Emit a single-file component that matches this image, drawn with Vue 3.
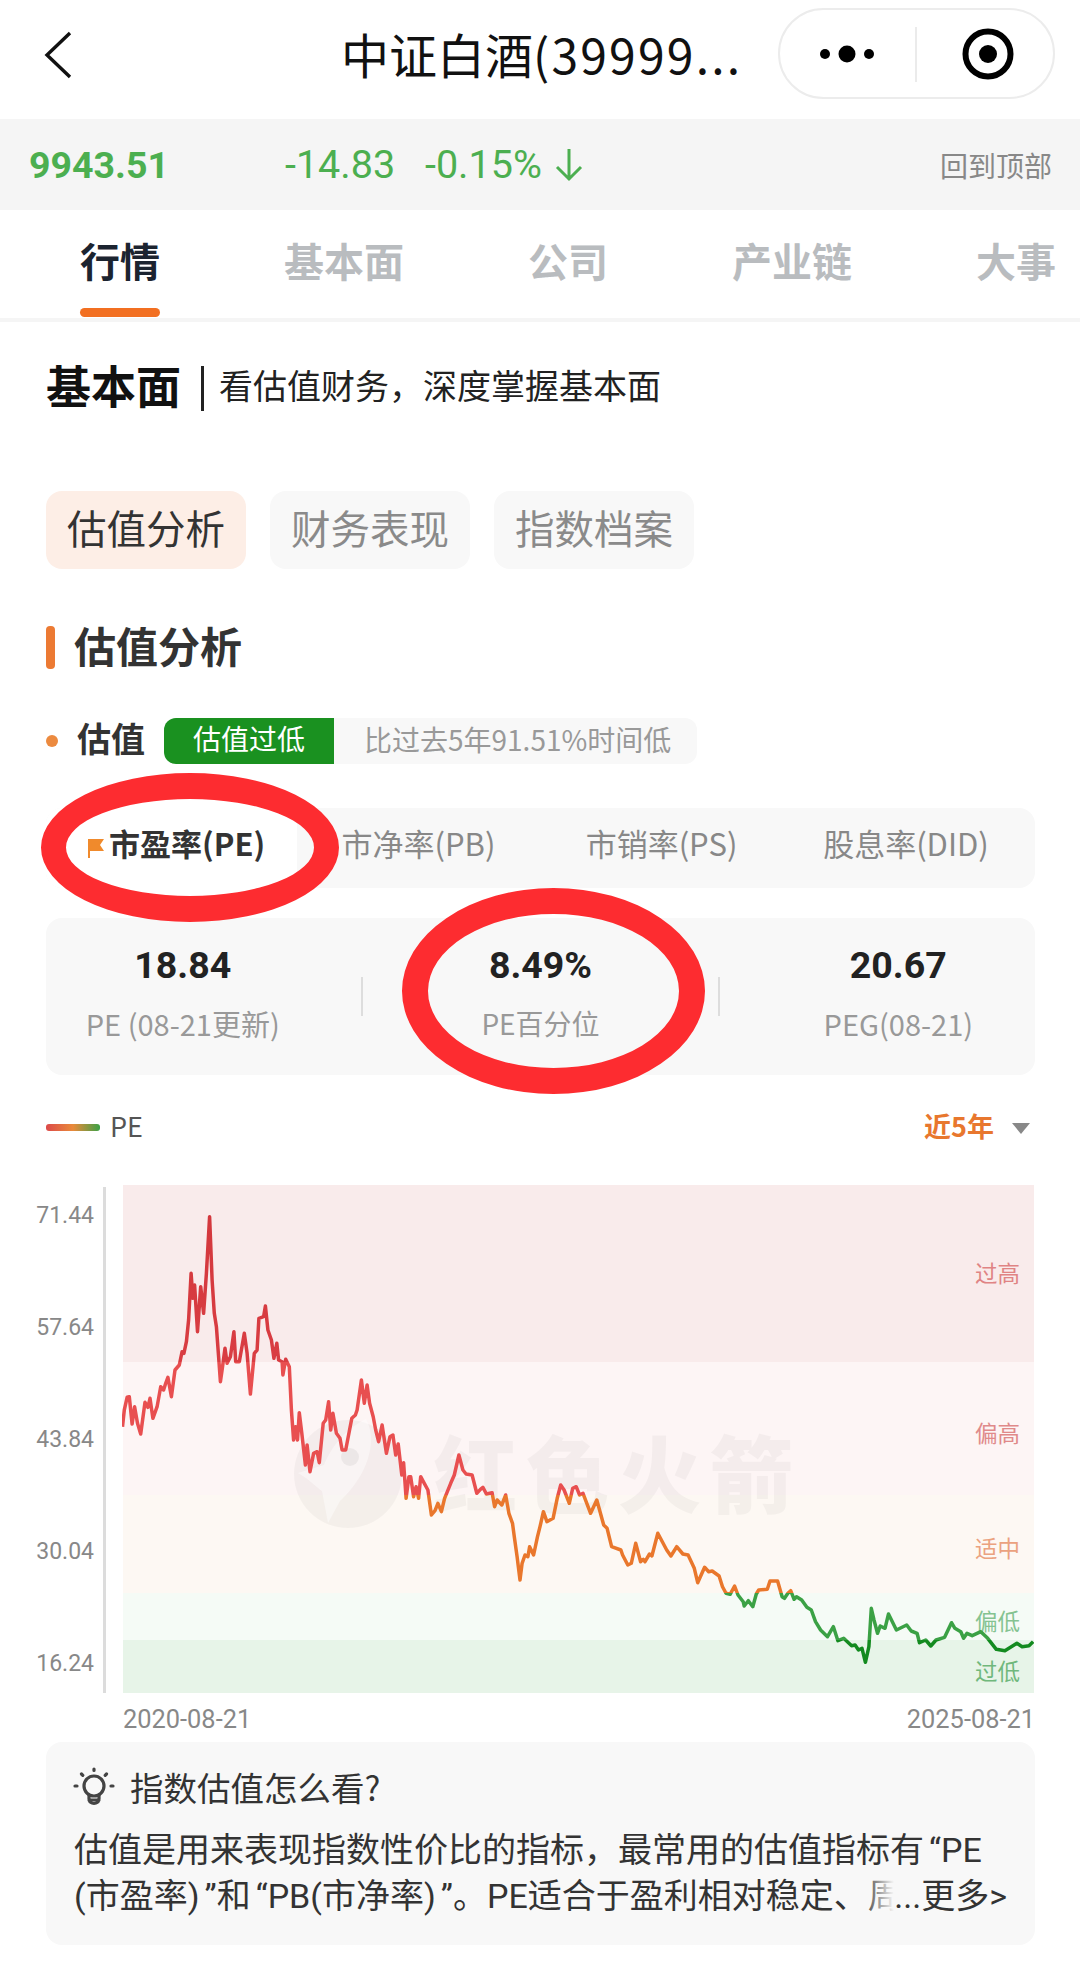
<template>
  <div class="page">
    <!-- top nav -->
    <div class="nav">
      <svg class="back" width="28" height="48" viewBox="0 0 28 48">
        <path d="M26 2 L3 24 L26 46" fill="none" stroke="#111" stroke-width="3.4" />
      </svg>
      <div class="nav-title">中证白酒<span>(39999...</span></div>
      <div class="capsule">
        <svg width="277" height="91" viewBox="778 8 277 91">
          <circle cx="825" cy="54" r="5" fill="#000" />
          <circle cx="847" cy="54" r="8.5" fill="#000" />
          <circle cx="869" cy="54" r="5" fill="#000" />
          <line x1="916" y1="27" x2="916" y2="82" stroke="#e4e4e4" stroke-width="1.5" />
          <circle cx="988" cy="54" r="22.5" fill="none" stroke="#000" stroke-width="6" />
          <circle cx="988" cy="54" r="9" fill="#000" />
        </svg>
      </div>
    </div>

    <!-- price strip -->
    <div class="price-bar">
      <span class="price">9943.51</span>
      <span class="change">-14.83</span>
      <span class="change pct">-0.15%</span>
      <svg class="arrow" width="28" height="34" viewBox="0 0 28 34">
        <path d="M14 1 V31 M2 19 L14 31 L26 19" fill="none" stroke="#4caf50" stroke-width="3" />
      </svg>
      <span class="to-top">回到顶部</span>
    </div>

    <div class="tabs">
      <div v-for="tab in tabs" :key="tab" class="tab" :class="{ active: tab === '行情' }">
        <span>{{ tab }}</span>
        <i v-if="tab === '行情'" class="tab-line"></i>
      </div>
    </div>

    <div class="content">
      <div class="head">
        <span class="head-title">基本面</span>
        <i class="head-sep"></i>
        <span class="head-sub">看估值财务，深度掌握基本面</span>
      </div>

      <div class="pills">
        <div v-for="(pill, i) in pills" :key="pill" class="pill" :class="{ active: i === 0 }">{{ pill }}</div>
      </div>

      <div class="section-title"><i></i><span>估值分析</span></div>

      <div class="val-row">
        <i class="dot"></i>
        <span class="val-label">估值</span>
        <div class="badge">
          <span class="badge-tag">估值过低</span>
          <span class="badge-text">比过去5年91.51%时间低</span>
        </div>
      </div>

      <div class="metric-tabs">
        <div class="metric active">
          <svg width="17" height="19" viewBox="0 0 17 19">
            <path d="M1 0 H17 L13 6 L17 12 H3 V19 H1 Z" fill="#f08a2c" />
          </svg>
          市盈率(PE)
        </div>
        <div class="metric">市净率(PB)</div>
        <div class="metric">市销率(PS)</div>
        <div class="metric last">股息率(DID)</div>
      </div>

      <div class="stats">
        <div class="stat first">
          <b>18.84</b>
          <span>PE (08-21更新)</span>
        </div>
        <i class="stat-sep"></i>
        <div class="stat mid">
          <b>8.49%</b>
          <span>PE百分位</span>
        </div>
        <i class="stat-sep"></i>
        <div class="stat third">
          <b>20.67</b>
          <span>PEG(08-21)</span>
        </div>
      </div>

      <div class="legend">
        <i class="swatch"></i>
        <span class="legend-name">PE</span>
        <span class="range">近5年</span>
        <i class="caret"></i>
      </div>

      <div class="chart">
        <div class="y-labels">
          <span v-for="v in yLabels" :key="v">{{ v }}</span>
        </div>
        <i class="axis"></i>
        <div class="plot">
          <div v-for="b in bands" :key="b.label" class="band" :class="b.cls">
            <span>{{ b.label }}</span>
          </div>
          <div class="watermark">
            <svg width="108" height="110" viewBox="0 0 108 110">
              <circle cx="54" cy="55" r="54" fill="#000" fill-opacity="0.035" />
              <path d="M72 0 C84 22 74 56 46 82 L34 104 L28 72 C20 66 12 58 4 54 L30 46 C40 22 56 8 72 0 Z" fill="#fff" fill-opacity="0.45" />
              <circle cx="56" cy="38" r="9" fill="#000" fill-opacity="0.05" />
            </svg>
            <span>红色火箭</span>
          </div>
          <svg class="line" width="912" height="508" viewBox="122 1185 912 508">
            <defs>
              <linearGradient id="peStroke" gradientUnits="userSpaceOnUse" x1="0" y1="1185" x2="0" y2="1693">
                <stop offset="0" stop-color="#d2373c" />
                <stop offset="0.348" stop-color="#d93d42" />
                <stop offset="0.348" stop-color="#e84f50" />
                <stop offset="0.61" stop-color="#e84f50" />
                <stop offset="0.61" stop-color="#e9772c" />
                <stop offset="0.803" stop-color="#e9772c" />
                <stop offset="0.803" stop-color="#3ba145" />
                <stop offset="0.896" stop-color="#3ba145" />
                <stop offset="0.896" stop-color="#138a1f" />
                <stop offset="1" stop-color="#138a1f" />
              </linearGradient>
            </defs>
            <path :d="pePath" fill="none" stroke="url(#peStroke)" stroke-width="3.5" stroke-linejoin="round" />
          </svg>
        </div>
      </div>

      <div class="dates">
        <span>2020-08-21</span>
        <span>2025-08-21</span>
      </div>

      <div class="card">
        <div class="card-head">
          <svg width="44" height="42" viewBox="0 0 44 42">
            <g fill="none" stroke="#444" stroke-linecap="round" stroke-width="3.2">
              <circle cx="21" cy="19" r="10" />
              <path d="M16 28 V32 C16 38 26 38 26 32 V28 M16 33 H26" />
              <path d="M21 2 V3.5 M8.5 7 L9.8 8.3 M33.5 7 L32.2 8.3 M2 19 H4 M38 19 H40" />
            </g>
          </svg>
          <span>指数估值怎么看?</span>
        </div>
        <p class="card-line">估值是用来表现指数性价比的指标，最常用的估值指标有<span class="q">“</span>PE</p>
        <p class="card-line clip">(市盈率)<span class="q">”</span>和<span class="q">“</span>PB(市净率)<span class="q">”</span>。PE适合于盈利相对稳定、周<span class="more">...更多&gt;</span></p>
      </div>
    </div>

    <!-- red marks drawn on top of the screenshot -->
    <svg class="marks" width="1080" height="1974" viewBox="0 0 1080 1974">
      <path fill="#fd2c30" fill-rule="evenodd" d="M41 847.5 a149 74.5 0 1 0 298 0 a149 74.5 0 1 0 -298 0 z M66 847.5 a124 48.5 0 1 0 248 0 a124 48.5 0 1 0 -248 0 z" />
      <path fill="#fd2c30" fill-rule="evenodd" d="M402 991 a151.5 103 0 1 0 303 0 a151.5 103 0 1 0 -303 0 z M428 991 a125.5 77 0 1 0 251 0 a125.5 77 0 1 0 -251 0 z" />
    </svg>
  </div>
</template>

<script setup>
const tabs = ['行情', '基本面', '公司', '产业链', '大事']
const pills = ['估值分析', '财务表现', '指数档案']
const yLabels = ['71.44', '57.64', '43.84', '30.04', '16.24']
const bands = [
  { label: '过高', cls: 'b-high2' },
  { label: '偏高', cls: 'b-high1' },
  { label: '适中', cls: 'b-mid' },
  { label: '偏低', cls: 'b-low1' },
  { label: '过低', cls: 'b-low2' },
]

// traced from the reference, in crop coordinates, converted to page px below
const partA = [
  343,770, 348,720, 356,682, 362,680, 370,762, 377,710, 385,760, 394,792, 406,697, 414,712, 420,685, 428,745,
  440,710, 450,650, 458,660, 464,640, 470,622, 480,680, 490,600, 502,585, 510,545, 515,550, 522,515, 528,450,
  535,310, 540,385, 545,345, 553,485, 562,350, 570,430, 578,310, 587,140, 594,330, 600,430, 606,470, 612,560,
  617,635, 622,600, 630,535, 636,580, 645,560, 655,485, 660,575, 670,575, 684,490, 692,550, 701,672, 712,550,
  720,540, 725,445, 738,440, 743,408, 750,480, 760,510, 767,565, 775,520, 780,570, 790,575, 792,615, 800,568,
  810,590, 816,720, 822,810, 828,770, 833,810, 838,728, 845,790, 855,885, 860,825, 868,905, 878,850, 888,845,
  894,878, 905,760, 912,750, 920,695, 926,780, 932,730, 942,790, 952,805, 958,840, 968,840, 985,745, 995,735,
  1000,720, 1012,630, 1020,700, 1028,645, 1035,700, 1045,740, 1052,780, 1060,815, 1070,765, 1082,850, 1092,800,
  1100,795, 1108,855, 1115,822, 1125,915, 1130,878, 1137,985, 1145,920, 1150,920, 1158,980, 1165,950, 1172,985,
  1178,920, 1188,940, 1198,960, 1208,1035, 1218,1022, 1226,1000, 1236,1025, 1245,985, 1262,940, 1272,915,
  1285,855, 1296,900, 1305,912, 1322,915, 1335,970, 1345,958, 1352,952, 1362,972, 1378,968, 1385,1010, 1392,990,
  1405,1005, 1416,975, 1425,1030, 1435,1060,
]
const partB = [
  1440,110, 1448,170, 1456,240, 1462,190, 1470,165, 1478,170, 1483,140, 1494,165, 1505,110, 1512,80,
]
const partC = [
  10,1025, 20,1055, 38,1045, 50,985, 60,945, 70,960, 85,1000, 95,955, 105,950, 115,975, 125,970, 147,1030, 165,990,
  185,1065, 195,1075, 208,1130, 235,1140, 240,1155, 255,1185, 265,1180, 278,1120, 292,1175, 300,1168, 305,1175,
  318,1152, 325,1158, 342,1090, 368,1140, 380,1158, 397,1130, 415,1152, 430,1155, 448,1195, 458,1238, 478,1192,
  490,1205, 500,1203, 520,1218, 530,1250, 540,1270, 552,1273, 565,1248, 575,1275, 590,1295, 593,1308, 605,1292,
  618,1310, 628,1272, 635,1260, 660,1258, 668,1233, 690,1233, 703,1280, 710,1285, 720,1270, 728,1262, 738,1288,
  745,1280, 760,1290, 775,1312, 788,1320, 800,1355, 815,1380, 835,1400, 852,1370, 865,1412, 882,1405, 905,1427,
  915,1425, 925,1440, 935,1435, 945,1477, 955,1430, 962,1315, 970,1350, 980,1390, 988,1368, 1002,1375, 1012,1332,
  1035,1380, 1065,1365, 1078,1383, 1095,1390, 1102,1418, 1120,1410, 1135,1428, 1150,1410, 1175,1402, 1195,1358,
  1205,1375, 1222,1385, 1230,1405, 1240,1390, 1255,1397, 1280,1385, 1300,1405, 1325,1438, 1350,1442, 1385,1420,
  1400,1430, 1420,1427, 1432,1415,
]

function toPoints(list, fx, fy) {
  const out = []
  for (let i = 0; i < list.length; i += 2) out.push(`${fx(list[i]).toFixed(1)} ${fy(list[i + 1]).toFixed(1)}`)
  return out
}

const pePath = 'M' + [
  ...toPoints(partA, (x) => x / 2.8, (y) => 1170 + y / 3),
  ...toPoints(partB, (x) => x / 2.8, (y) => 1500 + y / 3),
  ...toPoints(partC, (x) => 540 + x / 2.904, (y) => 1170 + y / 3),
].join(' L')
</script>

<style>
html, body {
  margin: 0;
  background: #fff;
}
</style>

<style scoped>
.page {
  position: relative;
  width: 1080px;
  height: 1974px;
  overflow: hidden;
  background: #fff;
  font-family: "Noto Sans CJK SC", "Noto Sans", sans-serif;
  color: #333;
}
i {
  display: block;
}

/* nav */
.nav {
  display: flex;
  align-items: center;
  height: 119px;
}
.back {
  margin: -10px 0 0 44px;
  flex: none;
}
.nav-title {
  margin: -14px 0 0 269px;
  font-size: 48px;
  line-height: 60px;
  color: #111;
  white-space: nowrap;
}
.nav-title span {
  letter-spacing: 2.2px;
}
.capsule {
  position: absolute;
  left: 778px;
  top: 8px;
  width: 277px;
  height: 91px;
  box-sizing: border-box;
  border: 2px solid #ececec;
  border-radius: 46px;
}
.capsule svg {
  display: block;
  margin: -2px;
}

/* price strip */
.price-bar {
  display: flex;
  align-items: center;
  height: 91px;
  padding: 0 28px 0 29px;
  background: #f5f5f5;
  font-family: Roboto, "Noto Sans", sans-serif;
  color: #4caf50;
}
.price {
  width: 256px;
  font-size: 37.5px;
  font-weight: 700;
}
.change {
  width: 140px;
  font-size: 39.5px;
}
.change.pct {
  width: 130px;
}
.arrow {
  flex: none;
}
.to-top {
  margin-left: auto;
  font-family: "Noto Sans CJK SC", sans-serif;
  font-size: 28px;
  color: #888;
}

/* main tabs */
.tabs {
  display: flex;
  gap: 124px;
  box-sizing: border-box;
  height: 112px;
  padding: 20px 0 0 80px;
  border-bottom: 4px solid #f5f5f5;
  overflow: hidden;
}
.tab {
  display: flex;
  flex-direction: column;
  flex: none;
  font-size: 40px;
  font-weight: 700;
  line-height: 60px;
  color: #b9bcbf;
}
.tab.active {
  color: #1c2430;
}
.tab-line {
  height: 9px;
  margin-top: 18px;
  border-radius: 5px;
  background: #f26f21;
}

.content {
  padding: 0 45px 0 46px;
}
.head {
  display: flex;
  align-items: center;
  height: 46px;
  margin-top: 42px;
}
.head-title {
  margin-top: -4px;
  font-size: 45px;
  font-weight: 700;
  color: #111;
  line-height: 46px;
}
.head-sep {
  width: 3px;
  height: 45px;
  margin: 2px 15px 0 20px;
  background: #222;
}
.head-sub {
  margin-top: -4px;
  font-size: 34px;
  color: #222;
  line-height: 46px;
}

.pills {
  display: flex;
  gap: 24px;
  margin-top: 81px;
}
.pill {
  width: 200px;
  height: 78px;
  border-radius: 16px;
  background: #f8f8f8;
  font-size: 39.5px;
  line-height: 71px;
  text-align: center;
  color: #8a8a8a;
}
.pill.active {
  background: #fdeee6;
  color: #333;
}

.section-title {
  display: flex;
  align-items: center;
  gap: 19px;
  height: 43px;
  margin-top: 57px;
  font-size: 42px;
  font-weight: 700;
  color: #333;
}
.section-title span {
  margin-top: -7px;
}
.section-title i {
  width: 9px;
  height: 43px;
  border-radius: 4px;
  background: #ec7a33;
}

.val-row {
  display: flex;
  align-items: center;
  height: 46px;
  margin-top: 49px;
}
.dot {
  width: 12px;
  height: 12px;
  border-radius: 50%;
  background: #ec8a3f;
}
.val-label {
  margin: -7px 0 0 19px;
  font-size: 34px;
  font-weight: 700;
  color: #333;
}
.badge {
  display: flex;
  align-items: center;
  width: 533px;
  height: 46px;
  margin-left: 19px;
  border-radius: 12px;
  overflow: hidden;
  background: #f8f8f8;
  font-size: 28px;
}
.badge-tag {
  width: 170px;
  height: 46px;
  line-height: 41px;
  text-align: center;
  background: #1a9120;
  color: #fff;
}
.badge-text {
  margin: -4px 0 0 30px;
  color: #999;
  white-space: nowrap;
}

.metric-tabs {
  display: flex;
  height: 80px;
  margin-top: 44px;
  border-radius: 16px;
  background: #f8f8f8;
}
.metric {
  display: flex;
  align-items: center;
  justify-content: center;
  box-sizing: border-box;
  width: 243px;
  padding-bottom: 11px;
  font-size: 31px;
  color: #888;
  white-space: nowrap;
}
.metric.last {
  width: 252px;
  padding-right: 6px;
}
.metric.active {
  gap: 5px;
  justify-content: flex-start;
  width: 251px;
  padding-left: 41px;
  border-radius: 16px;
  background: #fff;
  font-weight: 700;
  color: #333;
}
.metric.active svg {
  margin-top: 11px;
}

.stats {
  display: flex;
  align-items: center;
  height: 157px;
  margin-top: 30px;
  border-radius: 16px;
  background: #f8f8f8;
}
.stat {
  display: flex;
  flex-direction: column;
  align-items: center;
  box-sizing: border-box;
  width: 355px;
}
.stat.first {
  width: 316px;
  padding-right: 42px;
}
.stat.third {
  width: 316px;
  padding-left: 42px;
}
.stat b {
  margin-top: -7px;
  font-family: Roboto, "Noto Sans", sans-serif;
  font-size: 37.5px;
  line-height: 40px;
  font-weight: 700;
  color: #222;
}
.stat span {
  margin-top: 20px;
  font-size: 29px;
  line-height: 36px;
  color: #999;
  white-space: nowrap;
}
.stat.mid span {
  font-size: 28px;
}
.stat-sep {
  flex: none;
  width: 2px;
  height: 39px;
  background: #ddd;
}

.legend {
  display: flex;
  align-items: center;
  height: 30px;
  margin-top: 37px;
}
.swatch {
  width: 54px;
  height: 7px;
  border-radius: 3px;
  background: linear-gradient(90deg, #dc4a4a, #e98a3a 50%, #3ba145);
}
.legend-name {
  margin: -4px 0 0 10px;
  font-size: 27px;
  color: #555;
}
.range {
  margin: -4px 0 0 auto;
  font-size: 27px;
  font-weight: 700;
  color: #e8772e;
}
.caret {
  width: 0;
  height: 0;
  margin: 2px 5px 0 18px;
  border-top: 11px solid #888;
  border-left: 9px solid transparent;
  border-right: 9px solid transparent;
}

/* chart */
.chart {
  display: flex;
  height: 508px;
  margin-top: 43px;
}
.y-labels {
  display: flex;
  flex-direction: column;
  justify-content: space-between;
  align-items: flex-end;
  box-sizing: border-box;
  width: 48px;
  padding: 15px 0 13px;
  font-family: Roboto, "Noto Sans", sans-serif;
  font-size: 23px;
  line-height: 32px;
  color: #888;
}
.axis {
  flex: none;
  width: 3px;
  height: 506px;
  margin: 2px 0 0 9px;
  background: #dcdcdc;
}
.plot {
  position: relative;
  display: flex;
  flex-direction: column;
  width: 911.5px;
  margin-left: 16.5px;
  font-size: 22.5px;
}
.band {
  display: flex;
  align-items: center;
  justify-content: flex-end;
  box-sizing: border-box;
  padding: 6px 14px 0 0;
}
.b-high2 { height: 177px; padding-top: 0; padding-bottom: 3px; background: #f9ebeb; color: #e08484; }
.b-high1 { height: 133px; background: #fdf5f5; color: #e08a8a; }
.b-mid { height: 98px; background: #fdf8f3; color: #eba27f; }
.b-low1 { height: 47px; background: #f5fbf6; color: #85c391; }
.b-low2 { height: 53px; background: #e7f4e8; color: #70b87c; }
.watermark {
  position: absolute;
  left: 171px;
  top: 225px;
  display: flex;
  align-items: center;
  gap: 32px;
  font-size: 84px;
  font-weight: 900;
  letter-spacing: 8px;
  color: rgba(0, 0, 0, 0.035);
  white-space: nowrap;
}
.watermark svg {
  flex: none;
  margin-top: 6px;
}
.line {
  position: absolute;
  left: -0.5px;
  top: 0;
}

.dates {
  display: flex;
  justify-content: space-between;
  height: 30px;
  margin-top: 11px;
  padding: 0 0 0 77px;
  font-family: Roboto, "Noto Sans", sans-serif;
  font-size: 25.4px;
  line-height: 30px;
  color: #888;
}

.card {
  box-sizing: border-box;
  height: 203px;
  margin-top: 8px;
  padding: 24px 28px 0;
  border-radius: 16px;
  background: #f8f8f8;
}
.card-head {
  display: flex;
  align-items: center;
  gap: 13px;
  height: 44px;
  margin-left: -1px;
  font-size: 33.5px;
  color: #333;
}
.card-head svg {
  flex: none;
}
.card-head span {
  margin-top: -4px;
}
.card-line {
  margin: 0;
  font-family: Roboto, "Noto Sans CJK SC", sans-serif;
  font-size: 34px;
  line-height: 46px;
  color: #333;
  white-space: nowrap;
}
.card-head + .card-line {
  margin-top: 17px;
}
.q {
  margin-left: 5px;
}
.card-line.clip {
  position: relative;
  overflow: hidden;
}
.more {
  position: absolute;
  right: 0;
  top: 0;
  padding-left: 32px;
  background: linear-gradient(90deg, rgba(248, 248, 248, 0), #f8f8f8 32px);
}

.marks {
  position: absolute;
  left: 0;
  top: 0;
  pointer-events: none;
}
</style>
